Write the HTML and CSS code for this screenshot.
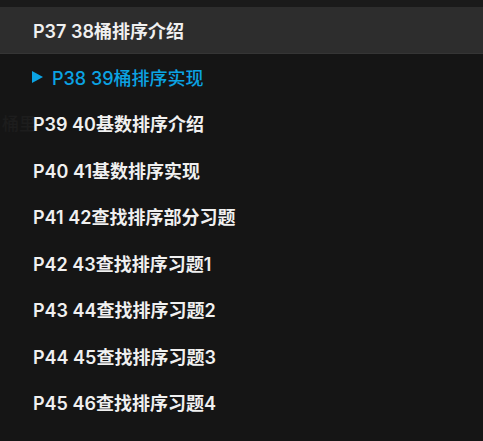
FILE: index.html
```html
<!DOCTYPE html>
<html lang="zh">
<head>
<meta charset="utf-8">
<link rel="stylesheet" href="styles.css">
</head>
<body>
<div class="panel">
  <div class="ghost">桶里</div>
  <ul class="list">
    <li class="item active"><span class="label">P37 38桶排序介绍</span></li>
    <li class="item playing"><span class="tri"></span><span class="label">P38 39桶排序实现</span></li>
    <li class="item"><span class="label">P39 40基数排序介绍</span></li>
    <li class="item"><span class="label">P40 41基数排序实现</span></li>
    <li class="item"><span class="label">P41 42查找排序部分习题</span></li>
    <li class="item"><span class="label">P42 43查找排序习题1</span></li>
    <li class="item"><span class="label">P43 44查找排序习题2</span></li>
    <li class="item"><span class="label">P44 45查找排序习题3</span></li>
    <li class="item"><span class="label">P45 46查找排序习题4</span></li>
  </ul>
</div>
</body>
</html>
```

FILE: styles.css
```css
html, body {
  margin: 0;
  padding: 0;
  background: #151515;
}
body {
  width: 483px;
  height: 441px;
  overflow: hidden;
  font-family: "Inter", "Noto Sans CJK SC", sans-serif;
}
.panel {
  position: relative;
  height: 441px;
  padding-top: 7px;
  box-sizing: border-box;
  background: #151515;
}
.panel::before {
  content: "";
  position: absolute;
  left: 0; right: 0; top: 0;
  height: 7px;
  background: #1a1a1a;
}
.ghost {
  position: absolute;
  left: 2px;
  top: 112px;
  font-size: 17px;
  font-weight: 500;
  color: #1d1d1d;
  line-height: 24px;
}
.list {
  position: relative;
  list-style: none;
  margin: 0;
  padding: 0;
}
.item {
  height: 46.5px;
  display: flex;
  align-items: center;
  padding-left: 33px;
  box-sizing: border-box;
  font-size: 18px;
  font-weight: 600;
  color: #f0f0f0;
}
.item.active {
  background: #2d2d2d;
  border-bottom: 1px solid #353535;
}
.item.playing {
  color: #0ba3e3;
  font-weight: 500;
  padding-left: 32px;
}
.tri {
  width: 0;
  height: 0;
  border-top: 6px solid transparent;
  border-bottom: 6px solid transparent;
  border-left: 11px solid #0ba3e3;
  margin-right: 9px;
}
```
